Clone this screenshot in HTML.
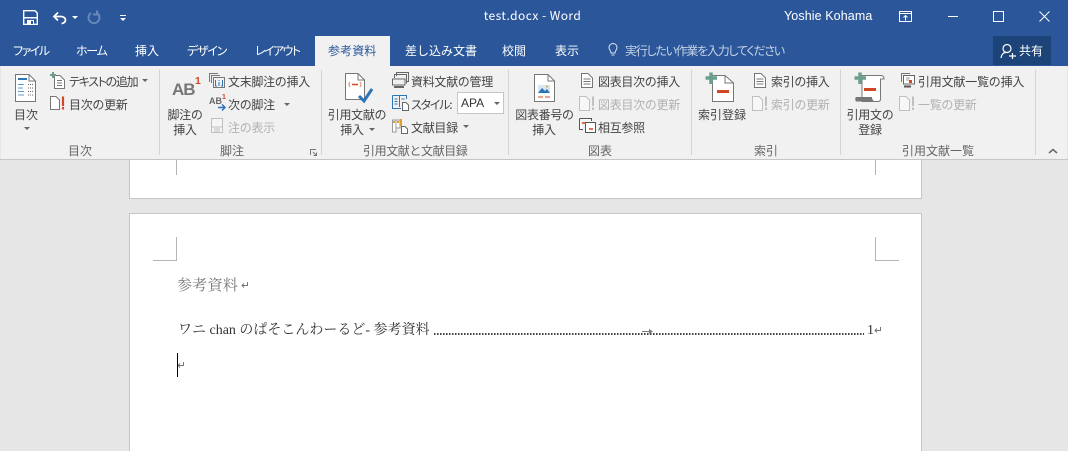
<!DOCTYPE html>
<html lang="ja"><head><meta charset="utf-8"><style>
html,body{margin:0;padding:0}
body{width:1068px;height:450px;overflow:hidden;position:relative;background:#e6e6e6;font-family:"Noto Sans CJK JP","Liberation Sans",sans-serif;font-size:12px;color:#444}
.a{position:absolute}
.t{position:absolute;white-space:nowrap;line-height:16px;height:16px;letter-spacing:-.3px}
.p{font-feature-settings:"palt"}
.c{text-align:center;transform:translateX(-50%)}
.w{color:#fff}
.tab{color:#fff;top:43px;letter-spacing:0}
.d{color:#b1b1b1}
.g{color:#666}
.sep{position:absolute;top:70px;height:85px;width:1px;background:#d4d4d4}
.dd{position:absolute;width:0;height:0;border-left:3px solid transparent;border-right:3px solid transparent;border-top:3px solid #666}
svg{position:absolute;overflow:visible}
.doc{font-family:"Liberation Serif","Noto Serif CJK SC",serif;letter-spacing:0}
</style></head><body>
<div class="a" style="left:0;top:0;width:1068px;height:66px;background:#2b579a"></div>
<div class="a" style="left:1px;top:66px;width:1066px;height:93px;background:#f1f1f1"></div>
<div class="a" style="left:0;top:159px;width:1068px;height:1px;background:#c6c6c6"></div>
<div class="a" style="left:315px;top:36px;width:75px;height:30px;background:#f1f1f1"></div>
<div class="a" style="left:993px;top:36px;width:58px;height:29px;background:#1c4478"></div>

<svg style="left:23px;top:10px" width="15" height="15"><path d="M.7.7H12L14.300 3V14.300H.7Z" fill="none" stroke="#fff" stroke-width="1.400"/><rect x="1" y="7" width="13" height="1.500" fill="#fff"/><rect x="4" y="10" width="7" height="4.500" fill="#fff"/><rect x="8" y="11" width="2" height="3" fill="#2b579a"/></svg>
<svg style="left:52px;top:10px" width="16" height="15" fill="none" stroke="#fff" stroke-width="1.800"><path d="M2 6.500H9C12 6.500 13.500 8.500 13.500 10S12 13.500 9.500 13.500"/><path d="M6 2.500L2 6.500L6 10.500"/></svg>
<div class="dd" style="left:72px;top:16px;border-top-color:#fff"></div>
<svg style="left:87px;top:10px" width="14" height="15" fill="none" stroke="#6788b8" stroke-width="2"><path d="M10 3A5.500 5.500 0 1 1 4 3"/><path d="M10 .5V4.500H6"/></svg>
<div class="a" style="left:120px;top:15px;width:6px;height:1px;background:#fff"></div>
<div class="dd" style="left:120px;top:18px;border-top-color:#fff"></div>

<span class="t w c" style="left:532.500px;top:8px;letter-spacing:.45px">test.docx - Word</span>
<span class="t w" style="left:784px;top:8px;font-family:'Liberation Sans',sans-serif;font-size:12.500px;letter-spacing:.1px">Yoshie Kohama</span>
<svg style="left:899px;top:11px" width="13" height="11" fill="none" stroke="#fff"><path d="M.5.500H12.500V10.500H.5ZM.5 2.500H12.500M6.500 9.500V4.500M4.500 6.500L6.500 4.500L8.500 6.500"/></svg>
<div class="a" style="left:948px;top:16px;width:10px;height:1px;background:#fff"></div>
<div class="a" style="left:993px;top:11px;width:9px;height:9px;border:1px solid #fff"></div>
<svg style="left:1039px;top:11px" width="11" height="11" stroke="#fff"><path d="M.5.500L10.500 10.500M10.500.500L.5 10.500"/></svg>

<span class="t tab p" style="left:13px;letter-spacing:-1.5px">ファイル</span>
<span class="t tab p" style="left:76px;letter-spacing:-1.300px">ホーム</span>
<span class="t tab" style="left:135px">挿入</span>
<span class="t tab p" style="left:187px;letter-spacing:-1.200px">デザイン</span>
<span class="t tab p" style="left:255px;letter-spacing:-1.600px">レイアウト</span>
<span class="t" style="left:328px;top:43px;color:#2b579a;letter-spacing:.1px">参考資料</span>
<span class="t tab" style="left:405px">差し込み文書</span>
<span class="t tab" style="left:502px">校閲</span>
<span class="t tab" style="left:555px">表示</span>
<svg style="left:608px;top:43px" width="10" height="14" fill="none" stroke="#dfe6f1"><path d="M3 10C3 7.500 1 7 1 4.500A4 4 0 0 1 9 4.500C9 7 7 7.500 7 10ZM3.500 12H6.500"/></svg>
<span class="t p" style="left:625px;top:43px;color:#c6d2e5;letter-spacing:-1.250px">実行したい作業を入力してください</span>
<svg style="left:1000px;top:43px" width="17" height="17" fill="none" stroke="#fff" stroke-width="1.200"><circle cx="7" cy="5.500" r="4"/><path d="M1 15C1.500 11.500 3.500 9.500 6 9.500M9 13H16M12.500 10V16"/></svg>
<span class="t w" style="left:1019px;top:43px;letter-spacing:0">共有</span>

<div class="sep" style="left:159px"></div><div class="sep" style="left:321px"></div><div class="sep" style="left:508px"></div><div class="sep" style="left:691px"></div><div class="sep" style="left:840px"></div><div class="sep" style="left:1035px"></div>

<!-- 目次 -->
<svg style="left:15px;top:74px" width="21" height="28"><path d="M.5.500H14L20.500 7V27.500H.5Z" fill="#fff" stroke="#777"/><path d="M14 .5V7H20.500" fill="none" stroke="#777"/><path d="M3 5H12" stroke="#2e75b6" stroke-width="2"/><path d="M3 10.500H9M3 14H8M3 17.500H9M3 21H9" stroke="#5b9bd5"/><path d="M13 10.500H18M13 14H18M13 17.500H18M13 21H18" stroke="#666" stroke-dasharray="1 1"/></svg>
<span class="t" style="left:14px;top:107px;letter-spacing:0">目次</span><div class="dd" style="left:24px;top:127px"></div>
<svg style="left:50px;top:72px" width="16" height="17"><path d="M4.500 3.500H10L14.500 8V16.500H4.500Z" fill="#fff" stroke="#777"/><path d="M7 8.500H12M7 11H12M7 13.500H12" stroke="#777"/><path d="M3 0V6M0 3H6" stroke="#6aa08b" stroke-width="2"/></svg>
<span class="t p" style="left:69px;top:74px;letter-spacing:-1.300px">テキストの追加</span><div class="dd" style="left:142px;top:79px"></div>
<svg style="left:50px;top:96px" width="16" height="14"><path d="M.5.500H6L9.500 4V13.500H.5Z" fill="#fff" stroke="#777"/><path d="M13 .5V10M13 11V13.500" stroke="#d24726" stroke-width="2.200"/></svg>
<span class="t" style="left:69px;top:97px">目次の更新</span>
<span class="t g" style="left:68px;top:143px;letter-spacing:0">目次</span>

<!-- 脚注 -->
<span class="t" style="left:172px;top:80px;font:bold 17px/20px 'Liberation Sans',sans-serif;color:#777;letter-spacing:-1px;height:20px">AB</span>
<span class="t" style="left:195px;top:75px;font:bold 10.500px/12px 'Liberation Sans',sans-serif;color:#d24726;letter-spacing:0">1</span>
<span class="t c" style="left:185px;top:107px">脚注の</span><span class="t c" style="left:185px;top:122px">挿入</span>
<svg style="left:209px;top:73px" width="16" height="16" fill="none" stroke="#777"><path d="M.5 9V.5H9M2.500 10V2.500H11M4.500 14.500V4.500H15.500V14.500Z" fill="#f1f1f1"/><path d="M6.500 7V13H8M13.500 7V13H12M10 7V8M10 9V13" stroke="#2e75b6"/></svg>
<span class="t" style="left:228px;top:74px">文末脚注の挿入</span>
<span class="t" style="left:209px;top:96px;font:bold 9px/10px 'Liberation Sans',sans-serif;color:#666;letter-spacing:0">AB</span><span class="t" style="left:222px;top:94px;font:bold 7px/8px 'Liberation Sans',sans-serif;color:#d24726;letter-spacing:0">1</span>
<svg style="left:218px;top:104px" width="8" height="7" fill="none" stroke="#2e75b6" stroke-width="1.500"><path d="M0 3.500H7M4 .5L7 3.500L4 6.500"/></svg>
<span class="t" style="left:228px;top:97px">次の脚注</span><div class="dd" style="left:284px;top:103px"></div>
<svg style="left:211px;top:118px" width="12" height="15"><rect x=".5" y=".5" width="11" height="14" fill="#f5f5f5" stroke="#c0c0c0"/><path d="M1 9H11M3 11H9M3 13H9" stroke="#c0c0c0"/></svg>
<span class="t d" style="left:228px;top:120px">注の表示</span>
<span class="t g" style="left:220px;top:143px;letter-spacing:0">脚注</span>
<svg style="left:310px;top:149px" width="7" height="7" fill="none" stroke="#777"><path d="M.5 6V.5H6M3 3L6.500 6.500M6.500 3.500V6.500H3.500"/></svg>

<!-- 引用文献 -->
<svg style="left:345px;top:73px" width="30" height="32"><path d="M.5.500H13L19.500 7V26.500H.5Z" fill="#fff" stroke="#777"/><path d="M13 .5V7H19.500" fill="none" stroke="#777"/><path d="M5 9Q3 11.500 5 14M15 9Q17 11.500 15 14" fill="none" stroke="#e79a87" stroke-width="1.300"/><path d="M7 11.500H13" stroke="#d24726" stroke-width="1.500"/><path d="M14 23L19 28L27 16" fill="none" stroke="#2e75b6" stroke-width="3"/></svg>
<span class="t c" style="left:357px;top:107px">引用文献の</span><span class="t c" style="left:352px;top:122px">挿入</span><div class="dd" style="left:369px;top:128px"></div>
<svg style="left:392px;top:72px" width="17" height="16" fill="none" stroke="#666"><path d="M4.500 4V.5H16.500V9.500H14M2.500 6V2.500H14.500V11.500M.5 13V7H13V13Z"/><path d="M2 15H12" stroke-width="2"/></svg>
<span class="t" style="left:411px;top:74px">資料文献の管理</span>
<svg style="left:392px;top:95px" width="17" height="16" fill="none" stroke="#2e75b6"><path d="M.5.500H14.500V4M.5.500V13.500H9M7.500.5V12M2.500 4H5.500M2.500 6.500H5.500M2.500 9H5.500M9.500 4H12.500"/><path d="M10.500 7.500H14L16.500 10V15.500H10.500Z" fill="#fff" stroke="#666"/></svg>
<span class="t p" style="left:411px;top:97px;letter-spacing:-1.200px">スタイル:</span>
<div class="a" style="left:457px;top:92px;width:45px;height:20px;background:#fff;border:1px solid #c6c6c6"></div>
<span class="t" style="left:461px;top:95px;font-family:'Liberation Sans',sans-serif;font-size:12px;color:#333;letter-spacing:0">APA</span><div class="dd" style="left:494px;top:102px"></div>
<svg style="left:392px;top:118px" width="17" height="16"><path d="M.5 2H4V14H.5ZM4 2H8V10H4Z" fill="#fff" stroke="#999"/><path d="M1 4H3M5 4H7" stroke="#e0a030" stroke-width="2"/><path d="M9 1V8" stroke="#e0a030" stroke-width="2"/><path d="M9.500 8.500H13L15.500 11V15.500H9.500Z" fill="#fff" stroke="#666"/></svg>
<span class="t" style="left:411px;top:120px">文献目録</span><div class="dd" style="left:463px;top:125px"></div>
<span class="t g" style="left:363px;top:143px;letter-spacing:-.4px">引用文献と文献目録</span>

<!-- 図表 -->
<svg style="left:534px;top:74px" width="21" height="28"><path d="M.5.500H14L20.500 7V27.500H.5Z" fill="#fff" stroke="#777"/><path d="M14 .5V7H20.500" fill="none" stroke="#777"/><rect x="4" y="11" width="12" height="8" fill="#dbe6f3"/><path d="M4 19L8 14L11 17L13 15L16 19Z" fill="#2e75b6"/><circle cx="13" cy="12.500" r="1" fill="#e0a030"/><path d="M4 23H9M11 23H16" stroke="#d24726"/></svg>
<span class="t c" style="left:544.500px;top:107px">図表番号の</span><span class="t c" style="left:544px;top:122px">挿入</span>
<svg style="left:581px;top:73px" width="12" height="15"><path d="M.5.500H7L11.500 5V14.500H.5Z" fill="#fff" stroke="#777"/><path d="M2.500 6H9.500M2.500 8.500H9.500M2.500 11H9.500" stroke="#777"/></svg>
<span class="t" style="left:598px;top:74px">図表目次の挿入</span>
<svg style="left:579px;top:96px" width="16" height="15"><path d="M.5.500H7L10.500 4V14.500H.5Z" fill="#f7f7f7" stroke="#c0c0c0"/><path d="M14 .5V10M14 11.500V14" stroke="#c0c0c0" stroke-width="2"/></svg>
<span class="t d" style="left:598px;top:97px">図表目次の更新</span>
<svg style="left:579px;top:118px" width="17" height="15" fill="none" stroke="#555"><path d="M.5.500H12.500V3M.5.500V11.500H4M6.500 4.500H16.500V14.500H6.500Z" fill="#fff"/><path d="M3 5H7M10 11H14" stroke="#d24726" stroke-width="1.500"/></svg>
<span class="t" style="left:598px;top:120px">相互参照</span>
<span class="t g" style="left:588px;top:143px;letter-spacing:0">図表</span>

<!-- 索引 -->
<svg style="left:705px;top:72px" width="29" height="30"><path d="M7.500 3.500H20L28.500 11V29.500H7.500Z" fill="#fff" stroke="#777"/><path d="M20 3.500V11H28.500" fill="none" stroke="#777"/><path d="M12 19.500H24" stroke="#d24726" stroke-width="3"/><path d="M6 .5V12M.5 6H12" stroke="#6aa08b" stroke-width="3.500"/></svg>
<span class="t c" style="left:722px;top:107px;letter-spacing:0">索引登録</span>
<svg style="left:754px;top:73px" width="12" height="15"><path d="M.5.500H7L11.500 5V14.500H.5Z" fill="#fff" stroke="#777"/><path d="M2.500 6H9.500M2.500 8.500H9.500M2.500 11H9.500" stroke="#777"/></svg>
<span class="t" style="left:771px;top:74px">索引の挿入</span>
<svg style="left:752px;top:96px" width="16" height="15"><path d="M.5.500H7L10.500 4V14.500H.5Z" fill="#f7f7f7" stroke="#c0c0c0"/><path d="M14 .5V10M14 11.500V14" stroke="#c0c0c0" stroke-width="2"/></svg>
<span class="t d" style="left:771px;top:97px">索引の更新</span>
<span class="t g" style="left:754px;top:143px;letter-spacing:0">索引</span>

<!-- 引用文献一覧 -->
<svg style="left:854px;top:72px" width="31" height="30"><path d="M8 3.500H27C29 3.500 30 5 30 7H26.500V27C26.500 28.500 25.500 29.500 24 29.500H8Z" fill="#fff" stroke="#777"/><path d="M2 29.500C1 28 1 26 2 25H18C18 27 19 29 21 29.500Z" fill="#777"/><path d="M10 17.500H22" stroke="#d24726" stroke-width="3"/><path d="M6 .5V12M.5 6H12" stroke="#6aa08b" stroke-width="3.500"/></svg>
<span class="t c" style="left:870px;top:107px">引用文の</span><span class="t c" style="left:870px;top:122px">登録</span>
<svg style="left:901px;top:73px" width="15" height="15"><path d="M.5 9V.5H9" fill="none" stroke="#777"/><path d="M2.500 2.500H13.500V11H2.500Z" fill="#fff" stroke="#666"/><path d="M5 5H9M5 7H8" stroke="#999"/><rect x="8" y="7" width="3" height="3" fill="#d24726"/><path d="M3 13.500H10" stroke="#555" stroke-width="2"/></svg>
<span class="t" style="left:918px;top:74px;letter-spacing:-.2px">引用文献一覧の挿入</span>
<svg style="left:899px;top:96px" width="16" height="15"><path d="M.5.500H7L10.500 4V14.500H.5Z" fill="#f7f7f7" stroke="#c0c0c0"/><path d="M14 .5V10M14 11.500V14" stroke="#c0c0c0" stroke-width="2"/></svg>
<span class="t d" style="left:918px;top:97px">一覧の更新</span>
<span class="t g" style="left:902px;top:143px;letter-spacing:0">引用文献一覧</span>
<svg style="left:1048px;top:148px" width="10" height="6" fill="none" stroke="#666" stroke-width="1.500"><path d="M1 5L5 1.500L9 5"/></svg>

<!-- document -->
<div class="a" style="left:129px;top:160px;width:791px;height:38px;background:#fff;border:solid #c6c6c6;border-width:0 1px 1px 1px"></div>
<div class="a" style="left:129px;top:213px;width:791px;height:237px;background:#fff;border:solid #c6c6c6;border-width:1px 1px 0 1px"></div>
<div class="a" style="left:176px;top:160px;width:1px;height:15px;background:#b4b4b4"></div>
<div class="a" style="left:875px;top:160px;width:1px;height:15px;background:#b4b4b4"></div>
<div class="a" style="left:153px;top:237px;width:23px;height:23px;border:solid #b4b4b4;border-width:0 1px 1px 0"></div>
<div class="a" style="left:875px;top:237px;width:23px;height:23px;border:solid #b4b4b4;border-width:0 0 1px 1px"></div>

<span class="t doc" style="left:177px;top:278px;font-size:15px;color:#777;letter-spacing:.3px">参考資料</span>
<svg style="left:241px;top:282px" width="7" height="7" fill="none" stroke="#777"><path d="M6.500 0V3.500H1M3 1.500L1 3.500L3 5.500"/></svg>
<span class="t doc" style="left:178px;top:323px;font-size:14px;color:#333">ワニ chan のぱそこんわーるど- 参考資料</span>
<div class="a" style="left:434px;top:333px;width:430px;height:2px;background:linear-gradient(90deg,#444 0,#444 1px,#999 1px,#999 2px,transparent 2px) 0 0/3px 2px repeat-x"></div>
<div class="a" style="left:642px;top:331px;width:10px;height:1px;background:#777"></div>
<svg style="left:649px;top:329px" width="5" height="5"><path d="M0 0L4 2.500L0 5Z" fill="#777"/></svg>
<span class="t doc" style="left:867px;top:323px;font-size:14px;color:#333">1</span>
<svg style="left:874px;top:327px" width="7" height="7" fill="none" stroke="#777"><path d="M6.500 0V3.500H1M3 1.500L1 3.500L3 5.500"/></svg>
<svg style="left:177px;top:362px" width="7" height="7" fill="none" stroke="#777"><path d="M6.500 0V3.500H1M3 1.500L1 3.500L3 5.500"/></svg>
<div class="a" style="left:177px;top:353px;width:1px;height:24px;background:#000"></div>
</body></html>
